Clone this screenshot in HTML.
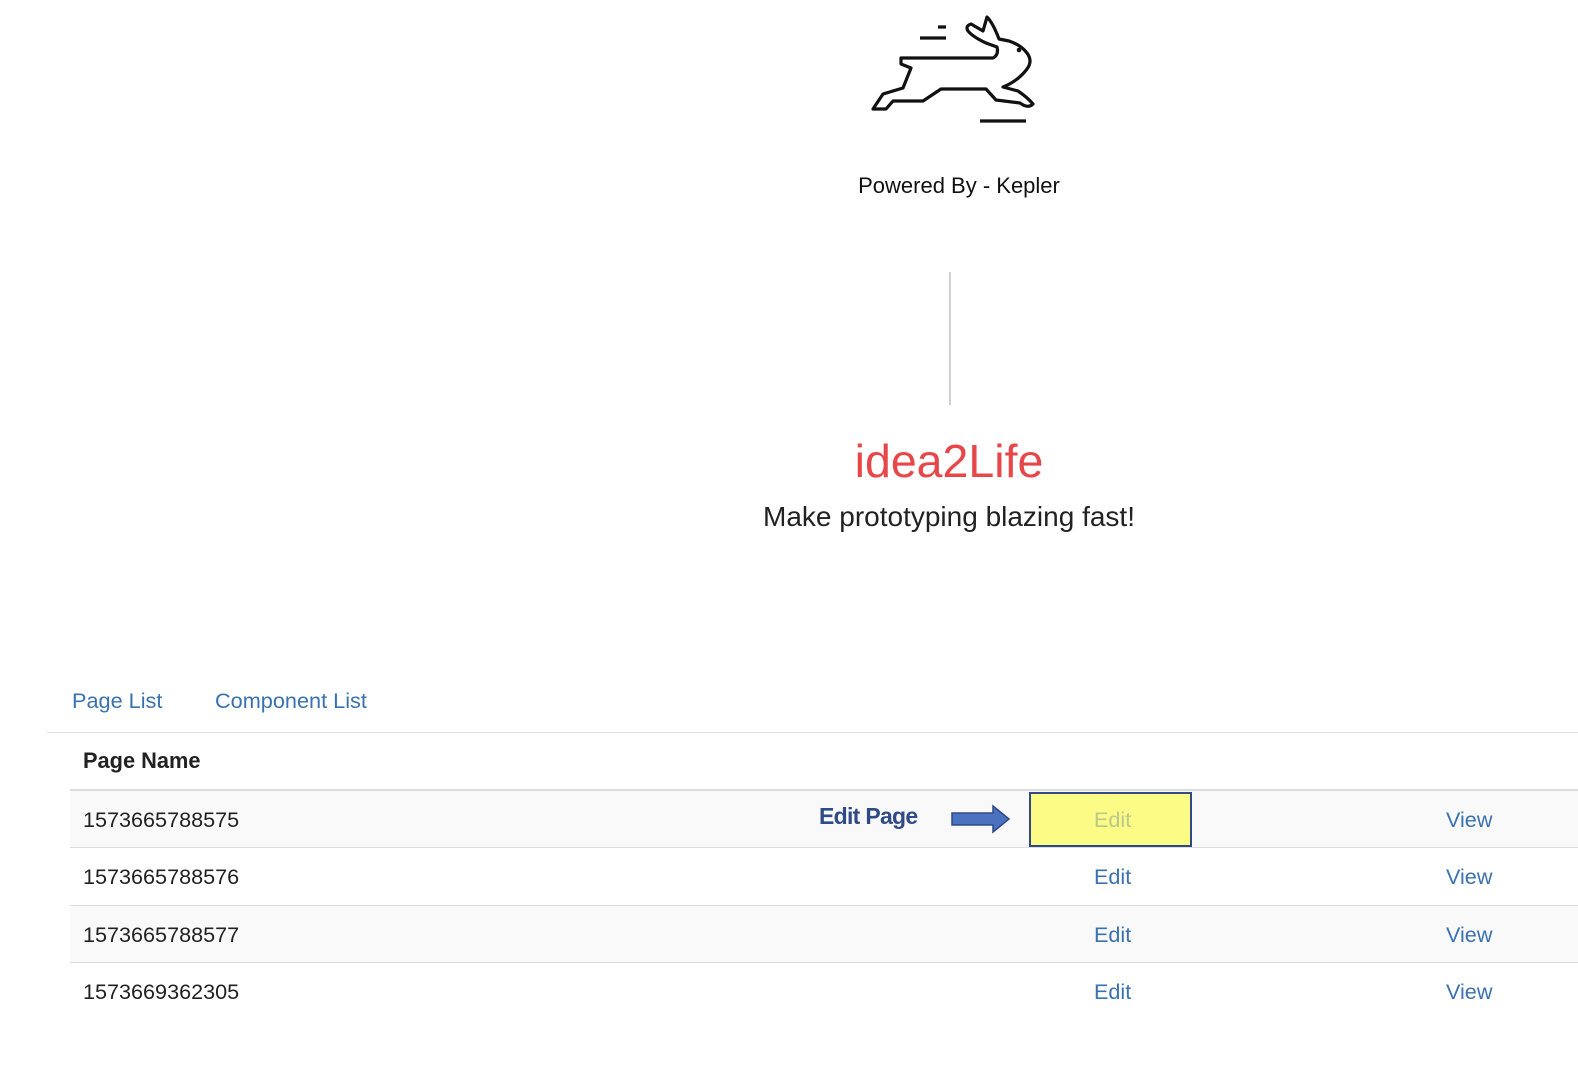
<!DOCTYPE html>
<html><head><meta charset="utf-8"><style>
body{margin:0;width:1578px;height:1074px;background:#fff;font-family:"Liberation Sans",Arial,sans-serif;position:relative;overflow:hidden}
.a{position:absolute;white-space:nowrap}
.link{color:#3a72b0}
.row{position:absolute;left:70px;width:1508px;height:57px}
.row .t{position:absolute;top:16px;font-size:21.6px;line-height:26px}
</style></head><body>
<svg class="a" style="left:0;top:0" width="1578" height="140">
<g transform="translate(3,1)">
<g fill="none" stroke="#111" stroke-width="3.2" stroke-linejoin="round" stroke-linecap="round">
<path d="M935 26h8M917 37h26M977 120h46" stroke-linecap="butt"/>
<path d="M898 57H990Q996 54 994 46L983 42Q970 36 965 30Q962 25 968 23L980 30L984 16Q990 22 996 38L1006 40Q1018 44 1024 52Q1030 60 1024 68Q1015 80 1000 86L1015 90Q1024 96 1030 103Q1025 108 1017 102L993 99L983 88H938L920 100H890L883 108H870L880 93L900 87L908 67L898 63Z"/>
</g>
<circle cx="1016" cy="49" r="2.3" fill="#111"/>
</g>
</svg>
<div class="a" style="left:0;width:1918px;top:173px;font-size:22px;text-align:center;color:#111">Powered By - Kepler</div>
<div class="a" style="left:949px;top:272px;width:2px;height:133px;background:#d0d0d0"></div>
<div class="a" style="left:0;width:1898px;top:434px;font-size:46.5px;text-align:center;color:#e8474a">idea2Life</div>
<div class="a" style="left:0;width:1898px;top:501px;font-size:28px;text-align:center;color:#222">Make prototyping blazing fast!</div>
<div class="a link" style="left:72px;top:688px;font-size:21.7px">Page List</div>
<div class="a link" style="left:215px;top:688px;font-size:21.7px">Component List</div>
<div class="a" style="left:47px;top:732px;width:1531px;height:1px;background:#ddd"></div>
<div class="a" style="left:83px;top:748px;font-size:21.8px;font-weight:bold;color:#222">Page Name</div>
<div class="a" style="left:70px;top:789px;width:1508px;height:2px;background:#ddd"></div>
<div class="row" style="top:791px;background:#f9f9f9"><div class="t" style="left:13px;color:#222">1573665788575</div><div class="t link" style="left:1376px">View</div></div>
<div class="a" style="left:70px;top:847px;width:1508px;height:1px;background:#ddd"></div>
<div class="row" style="top:848px"><div class="t" style="left:13px;color:#222">1573665788576</div><div class="t link" style="left:1024px">Edit</div><div class="t link" style="left:1376px">View</div></div>
<div class="a" style="left:70px;top:905px;width:1508px;height:1px;background:#ddd"></div>
<div class="row" style="top:906px;background:#f9f9f9"><div class="t" style="left:13px;color:#222">1573665788577</div><div class="t link" style="left:1024px">Edit</div><div class="t link" style="left:1376px">View</div></div>
<div class="a" style="left:70px;top:962px;width:1508px;height:1px;background:#ddd"></div>
<div class="row" style="top:963px"><div class="t" style="left:13px;color:#222">1573669362305</div><div class="t link" style="left:1024px">Edit</div><div class="t link" style="left:1376px">View</div></div>
<div class="a" style="left:1029px;top:792px;width:159px;height:51px;background:#fbfb86;border:2px solid #2f4a86"></div>
<div class="a" style="left:1094px;top:807px;font-size:21.6px;color:#b9c98a">Edit</div>
<div class="a" style="left:819px;top:803px;font-size:23px;font-weight:bold;color:#2f4a86;letter-spacing:-0.7px">Edit Page</div>
<svg class="a" style="left:950px;top:804px" width="62" height="30"><path d="M2 9H43V2L59 15L43 28V21H2Z" fill="#4a72c0" stroke="#2f4a86" stroke-width="1.5"/></svg>
</body></html>
